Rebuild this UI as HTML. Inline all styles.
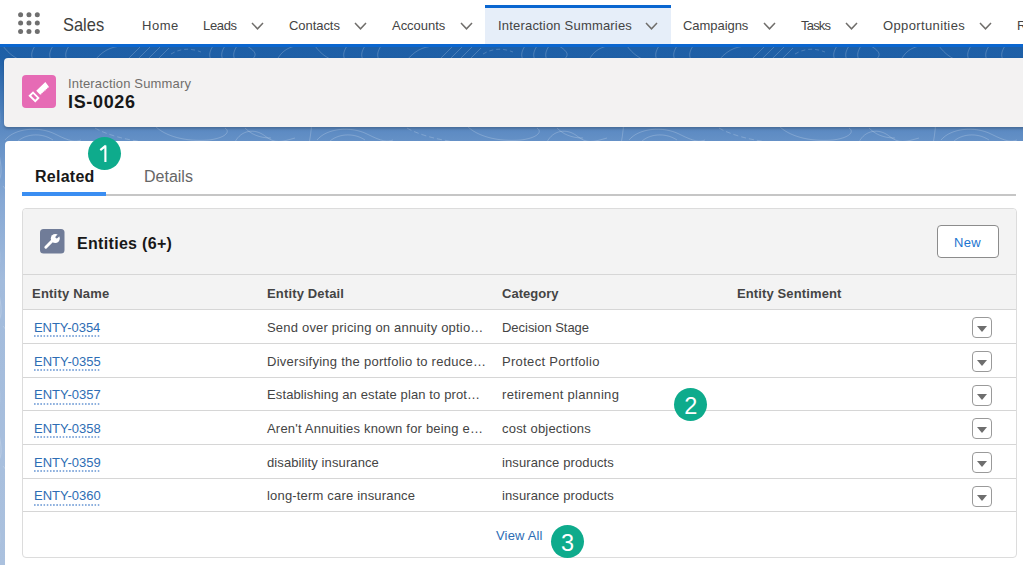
<!DOCTYPE html>
<html><head><meta charset="utf-8">
<style>
*{box-sizing:border-box;margin:0;padding:0}
html,body{width:1023px;height:565px;overflow:hidden;font-family:"Liberation Sans",sans-serif;color:#181818;background:#fff;position:relative}
.a{position:absolute}
.t{position:absolute;white-space:nowrap;line-height:1.2}
#nav{position:absolute;left:0;top:0;width:1023px;height:44px;background:#fff}
#bg{position:absolute;left:0;top:44px;width:1023px;height:521px;background:linear-gradient(180deg,#1e5fa6 0px,#1f60a7 14px,#3f76b5 50px,#6490c6 96px,#86a8d4 156px,#a2bbdc 236px,#abc1de 521px)}
#bgline{position:absolute;left:0;top:44px;width:1023px;height:2.5px;background:#0a66d0}
.dots{position:absolute;left:18px;top:12px;width:22px;height:22px}
.dots i{position:absolute;width:4.6px;height:4.6px;border-radius:50%;background:#706e6b}
.chev{position:absolute;top:22px;width:13px;height:8px}
#active{position:absolute;left:485px;top:5px;width:186px;height:39px;background:#e6eef9;border-top:3px solid #0a66d0}
#hdr{position:absolute;left:4px;top:58px;width:1030px;height:69px;background:#f3f2f2;border-radius:4px;box-shadow:0 1.5px 2.5px rgba(0,0,0,.2)}
#icon1{position:absolute;left:22.3px;top:75.2px;width:33.3px;height:33px;border-radius:4px;background:#e66bb5}
#main{position:absolute;left:5px;top:141px;width:1030px;height:440px;background:#fff;border-radius:4px}
#tabline{position:absolute;left:22px;top:194px;width:994px;height:2px;background:#c6c6c6}
#tabsel{position:absolute;left:22px;top:192px;width:84px;height:3.5px;background:#3a8ef2}
#card{position:absolute;left:22px;top:208px;width:995px;height:350px;border:1px solid #dcdcdc;border-radius:4px;background:#fff}
#chead{position:absolute;left:23px;top:209px;width:993px;height:66px;background:#f3f3f3;border-bottom:1px solid #d6d6d6;border-radius:4px 4px 0 0}
#thead{position:absolute;left:23px;top:275px;width:993px;height:35px;background:#f3f3f3}
.hl{position:absolute;left:23px;width:993px;height:1px;background:#d6d6d6}
.dd{position:absolute;left:971.5px;width:20.5px;height:21px;border:1px solid #9a9a9a;border-radius:4px;background:#fff}
.dd:after{content:"";position:absolute;left:4.9px;top:7.7px;border-left:5px solid transparent;border-right:5px solid transparent;border-top:6px solid #6e6e6e}
#newbtn{position:absolute;left:937px;top:225px;width:62px;height:33px;border:1px solid #8c8c8c;border-radius:4px;background:#fff}
.badge{position:absolute;width:33px;height:33px;border-radius:50%;background:#0eab8c;color:#fff;font-size:23.5px;text-align:center;line-height:36.4px}
.lnk{background-image:linear-gradient(90deg,#8db0de 62%,rgba(255,255,255,0) 62%);background-size:3.2px 2px;background-repeat:repeat-x;background-position:0 100%;padding-bottom:2.3px}
</style></head><body>
<div id="nav">
  <svg class="a" style="left:0;top:0" width="50" height="44" viewBox="0 0 50 44"><g fill="#6f6f6f"><circle cx="20.6" cy="14.8" r="2.5"/><circle cx="28.95" cy="14.8" r="2.5"/><circle cx="37.3" cy="14.8" r="2.5"/><circle cx="20.6" cy="23.1" r="2.5"/><circle cx="28.95" cy="23.1" r="2.5"/><circle cx="37.3" cy="23.1" r="2.5"/><circle cx="20.6" cy="31.4" r="2.5"/><circle cx="28.95" cy="31.4" r="2.5"/><circle cx="37.3" cy="31.4" r="2.5"/></g></svg>
  <div id="active"></div>
  <svg class="chev" style="left:250.5px" viewBox="0 0 13 8"><path d="M1 1 L6.5 6.8 L12 1" fill="none" stroke="#706e6b" stroke-width="1.5"/></svg>
  <svg class="chev" style="left:354px" viewBox="0 0 13 8"><path d="M1 1 L6.5 6.8 L12 1" fill="none" stroke="#706e6b" stroke-width="1.5"/></svg>
  <svg class="chev" style="left:460px" viewBox="0 0 13 8"><path d="M1 1 L6.5 6.8 L12 1" fill="none" stroke="#706e6b" stroke-width="1.5"/></svg>
  <svg class="chev" style="left:645px" viewBox="0 0 13 8"><path d="M1 1 L6.5 6.8 L12 1" fill="none" stroke="#706e6b" stroke-width="1.5"/></svg>
  <svg class="chev" style="left:762.5px" viewBox="0 0 13 8"><path d="M1 1 L6.5 6.8 L12 1" fill="none" stroke="#706e6b" stroke-width="1.5"/></svg>
  <svg class="chev" style="left:845px" viewBox="0 0 13 8"><path d="M1 1 L6.5 6.8 L12 1" fill="none" stroke="#706e6b" stroke-width="1.5"/></svg>
  <svg class="chev" style="left:978.5px" viewBox="0 0 13 8"><path d="M1 1 L6.5 6.8 L12 1" fill="none" stroke="#706e6b" stroke-width="1.5"/></svg>
</div>
<div id="bg"></div>
<svg class="a" style="left:0;top:44px" width="1023" height="521" viewBox="0 0 1023 521">
  <defs>
    <pattern id="topo" patternUnits="userSpaceOnUse" width="312" height="140" x="-5" y="0">
      <g fill="none" stroke="#ffffff" stroke-opacity="0.22" stroke-width="0.9">
        <path d="M8 2 C14 10 20 14 26 16"/>
        <path d="M40 2 C36 8 36 12 38 16"/>
        <path d="M58 2 C54 8 54 12 56 16"/>
        <path d="M74 2 C70 8 70 12 72 16"/>
        <path d="M100 16 C110 4 120 2 130 2"/>
        <path d="M132 16 L146 2 M142 16 L156 2 M152 16 L166 2 M162 16 L174 4"/>
        <path d="M176 10 C186 4 196 4 206 8" stroke-dasharray="4 3"/>
        <path d="M218 2 C214 8 214 12 216 16 M230 2 C226 8 226 12 228 16 M242 2 C238 8 238 12 240 16"/>
        <path d="M252 2 C262 8 262 12 256 16"/>
        <path d="M282 16 C286 8 292 4 300 2"/>
        <path d="M10 96 C20 84 44 82 60 90 S80 98 86 96"/>
        <path d="M22 98 C30 90 46 88 58 96"/>
        <path d="M100 84 C110 90 130 96 150 98" stroke-dasharray="5 3"/>
        <path d="M160 82 C170 92 190 98 214 96 C230 94 236 88 230 84"/>
        <path d="M240 98 C246 86 260 84 270 92 S286 98 300 94"/>
        <path d="M250 84 C256 90 264 94 276 94"/>
        <path d="M0 40 C6 60 6 80 2 100" />
        <path d="M4 110 C8 130 6 136 0 140" />
      </g>
    </pattern>
  </defs>
  <rect x="0" y="0" width="1023" height="521" fill="url(#topo)"/>
</svg>
<div id="bgline"></div>
<div id="hdr"></div>
<svg id="icon1" viewBox="0 0 33 33">
  <polygon points="23.20,7.10 26.60,11.50 26.40,12.76 25.13,12.83 24.94,14.09 23.67,14.17 23.47,15.43 22.20,15.50 22.00,16.76 20.73,16.83 20.54,18.09 19.27,18.17 19.07,19.43 17.80,19.50 14.10,15.80" fill="#fff"/>
  <polygon points="10.9,17.6 16.2,22.9 13.1,26.1 7.6,20.7" fill="none" stroke="#fff" stroke-width="1.9"/>
</svg>
<div id="main"></div>
<div id="tabline"></div>
<div id="tabsel"></div>
<div id="card"></div>
<div id="chead"></div>
<div id="thead"></div>
<svg class="a" style="left:40px;top:228.5px" width="25" height="25" viewBox="0 0 25 25">
  <rect x="0" y="0" width="24.5" height="24.5" rx="3.5" fill="#707c98"/>
  <line x1="5.8" y1="18.2" x2="12.5" y2="11.5" stroke="#fff" stroke-width="2.9" stroke-linecap="round"/>
  <circle cx="15.3" cy="9.5" r="4.5" fill="#fff"/>
  <line x1="16.7" y1="8.1" x2="21" y2="3.8" stroke="#707c98" stroke-width="2.6" stroke-linecap="round"/>
</svg>
<div id="newbtn"></div>
<div class="hl" style="top:309px"></div>
<div class="hl" style="top:343px"></div>
<div class="hl" style="top:377px"></div>
<div class="hl" style="top:410px"></div>
<div class="hl" style="top:444px"></div>
<div class="hl" style="top:478px"></div>
<div class="hl" style="top:511px"></div>

<div class="dd" style="top:317px"></div>
<div class="dd" style="top:351px"></div>
<div class="dd" style="top:385px"></div>
<div class="dd" style="top:418px"></div>
<div class="dd" style="top:452px"></div>
<div class="dd" style="top:486px"></div>

<div class="t" id="sales" style="left:63px;top:14px;font-size:19px;font-weight:normal;color:#3e3e3c;transform:scaleX(0.865);transform-origin:0 0;">Sales</div>
<div class="t" id="home" style="left:142px;top:18px;font-size:13px;font-weight:normal;color:#444;letter-spacing:0.534px;">Home</div>
<div class="t" id="leads" style="left:203px;top:18px;font-size:13px;font-weight:normal;color:#444;letter-spacing:-0.350px;">Leads</div>
<div class="t" id="contacts" style="left:289px;top:18px;font-size:13px;font-weight:normal;color:#444;letter-spacing:-0.058px;">Contacts</div>
<div class="t" id="accounts" style="left:392px;top:18px;font-size:13px;font-weight:normal;color:#444;letter-spacing:-0.029px;">Accounts</div>
<div class="t" id="isum" style="left:498px;top:18px;font-size:13px;font-weight:normal;color:#444;letter-spacing:0.190px;">Interaction Summaries</div>
<div class="t" id="camp" style="left:683px;top:18px;font-size:13px;font-weight:normal;color:#444;letter-spacing:-0.049px;">Campaigns</div>
<div class="t" id="tasks" style="left:801px;top:18px;font-size:13px;font-weight:normal;color:#444;letter-spacing:-0.800px;">Tasks</div>
<div class="t" id="opp" style="left:883px;top:18px;font-size:13px;font-weight:normal;color:#444;letter-spacing:0.367px;">Opportunities</div>
<div class="t" id="r" style="left:1017px;top:18px;font-size:13px;font-weight:normal;color:#444;">R</div>
<div class="t" id="isl" style="left:68px;top:76px;font-size:13px;font-weight:normal;color:#706e6b;letter-spacing:0.166px;">Interaction Summary</div>
<div class="t" id="isid" style="left:68px;top:91.8px;font-size:18px;font-weight:bold;color:#181818;letter-spacing:0.666px;">IS-0026</div>
<div class="t" id="related" style="left:35px;top:166.7px;font-size:16px;font-weight:bold;color:#181818;letter-spacing:0.266px;">Related</div>
<div class="t" id="details" style="left:144px;top:166.7px;font-size:16px;font-weight:normal;color:#666;">Details</div>
<div class="t" id="ent" style="left:77px;top:234px;font-size:16px;font-weight:bold;color:#181818;letter-spacing:0.317px;">Entities (6+)</div>
<div class="t" id="new" style="left:954px;top:234.8px;font-size:13px;font-weight:normal;color:#1b75d0;letter-spacing:0.300px;">New</div>
<div class="t" id="th1" style="left:32px;top:285.7px;font-size:13px;font-weight:bold;color:#444;letter-spacing:0.220px;">Entity Name</div>
<div class="t" id="th2" style="left:267px;top:285.7px;font-size:13px;font-weight:bold;color:#444;letter-spacing:0.150px;">Entity Detail</div>
<div class="t" id="th3" style="left:502px;top:285.7px;font-size:13px;font-weight:bold;color:#444;letter-spacing:0.029px;">Category</div>
<div class="t" id="th4" style="left:737px;top:285.7px;font-size:13px;font-weight:bold;color:#444;letter-spacing:0.120px;">Entity Sentiment</div>
<div class="t" id="l0" style="left:34px;top:319.9px;font-size:13px;font-weight:normal;color:#2e6db4;letter-spacing:-0.051px;"><span class="lnk">ENTY-0354</span></div>
<div class="t" id="d0" style="left:267px;top:319.9px;font-size:13px;font-weight:normal;color:#444;letter-spacing:0.200px;">Send over pricing on annuity optio…</div>
<div class="t" id="c0" style="left:502px;top:319.9px;font-size:13px;font-weight:normal;color:#444;letter-spacing:-0.030px;">Decision Stage</div>
<div class="t" id="l1" style="left:34px;top:353.57px;font-size:13px;font-weight:normal;color:#2e6db4;"><span class="lnk">ENTY-0355</span></div>
<div class="t" id="d1" style="left:267px;top:353.57px;font-size:13px;font-weight:normal;color:#444;letter-spacing:0.261px;">Diversifying the portfolio to reduce…</div>
<div class="t" id="c1" style="left:502px;top:353.57px;font-size:13px;font-weight:normal;color:#444;letter-spacing:0.312px;">Protect Portfolio</div>
<div class="t" id="l2" style="left:34px;top:387.24px;font-size:13px;font-weight:normal;color:#2e6db4;"><span class="lnk">ENTY-0357</span></div>
<div class="t" id="d2" style="left:267px;top:387.24px;font-size:13px;font-weight:normal;color:#444;letter-spacing:0.120px;">Establishing an estate plan to prot…</div>
<div class="t" id="c2" style="left:502px;top:387.24px;font-size:13px;font-weight:normal;color:#444;letter-spacing:0.311px;">retirement planning</div>
<div class="t" id="l3" style="left:34px;top:420.90999999999997px;font-size:13px;font-weight:normal;color:#2e6db4;"><span class="lnk">ENTY-0358</span></div>
<div class="t" id="d3" style="left:267px;top:420.90999999999997px;font-size:13px;font-weight:normal;color:#444;letter-spacing:0.200px;">Aren't Annuities known for being e…</div>
<div class="t" id="c3" style="left:502px;top:420.90999999999997px;font-size:13px;font-weight:normal;color:#444;letter-spacing:0.200px;">cost objections</div>
<div class="t" id="l4" style="left:34px;top:454.58px;font-size:13px;font-weight:normal;color:#2e6db4;"><span class="lnk">ENTY-0359</span></div>
<div class="t" id="d4" style="left:267px;top:454.58px;font-size:13px;font-weight:normal;color:#444;letter-spacing:0.105px;">disability insurance</div>
<div class="t" id="c4" style="left:502px;top:454.58px;font-size:13px;font-weight:normal;color:#444;letter-spacing:0.118px;">insurance products</div>
<div class="t" id="l5" style="left:34px;top:488.25px;font-size:13px;font-weight:normal;color:#2e6db4;"><span class="lnk">ENTY-0360</span></div>
<div class="t" id="d5" style="left:267px;top:488.25px;font-size:13px;font-weight:normal;color:#444;letter-spacing:0.183px;">long-term care insurance</div>
<div class="t" id="c5" style="left:502px;top:488.25px;font-size:13px;font-weight:normal;color:#444;letter-spacing:0.118px;">insurance products</div>
<div class="t" id="va" style="left:496px;top:527.8px;font-size:13px;font-weight:normal;color:#2e6db4;letter-spacing:0.171px;">View All</div>
<div class="badge" style="left:88px;top:137.2px"><svg width="33" height="33" viewBox="0 0 33 33" style="position:absolute;left:0;top:0"><path d="M17.4 24.9 V8.5 M17.8 8.6 L12.3 13.1" stroke="#fff" stroke-width="2.1" fill="none"/></svg></div>
<div class="badge" style="left:674.4px;top:387.8px">2</div>
<div class="badge" style="left:551px;top:525px">3</div>
</body></html>
